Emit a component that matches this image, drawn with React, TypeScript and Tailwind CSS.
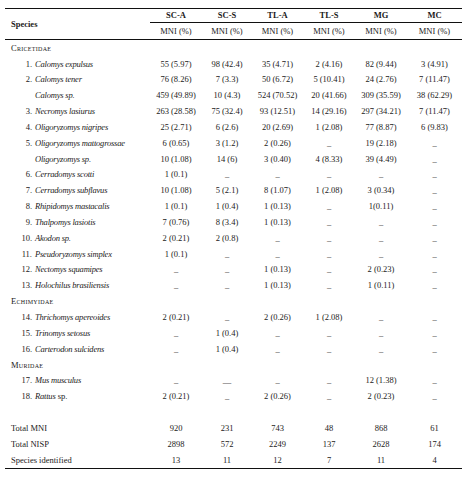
import React from 'react';

type Row =
  | { kind: 'family'; name: string }
  | { kind: 'blank' }
  | { kind: 'total'; name: string; values: string[] }
  | { kind: 'species'; n?: string; name: string; roman?: string; values: string[] };

const sites = ['SC-A', 'SC-S', 'TL-A', 'TL-S', 'MG', 'MC'];

const rows: Row[] = [
  { kind: 'family', name: 'Cricetidae' },
  { kind: 'species', n: '1.', name: 'Calomys expulsus', values: ['55 (5.97)', '98 (42.4)', '35 (4.71)', '2 (4.16)', '82 (9.44)', '3 (4.91)'] },
  { kind: 'species', n: '2.', name: 'Calomys tener', values: ['76 (8.26)', '7 (3.3)', '50 (6.72)', '5 (10.41)', '24 (2.76)', '7 (11.47)'] },
  { kind: 'species', name: 'Calomys sp.', values: ['459 (49.89)', '10 (4.3)', '524 (70.52)', '20 (41.66)', '309 (35.59)', '38 (62.29)'] },
  { kind: 'species', n: '3.', name: 'Necromys lasiurus', values: ['263 (28.58)', '75 (32.4)', '93 (12.51)', '14 (29.16)', '297 (34.21)', '7 (11.47)'] },
  { kind: 'species', n: '4.', name: 'Oligoryzomys nigripes', values: ['25 (2.71)', '6 (2.6)', '20 (2.69)', '1 (2.08)', '77 (8.87)', '6 (9.83)'] },
  { kind: 'species', n: '5.', name: 'Oligoryzomys mattogrossae', values: ['6 (0.65)', '3 (1.2)', '2 (0.26)', '_', '19 (2.18)', '_'] },
  { kind: 'species', name: 'Oligoryzomys sp.', values: ['10 (1.08)', '14 (6)', '3 (0.40)', '4 (8.33)', '39 (4.49)', '_'] },
  { kind: 'species', n: '6.', name: 'Cerradomys scotti', values: ['1 (0.1)', '_', '_', '_', '_', '_'] },
  { kind: 'species', n: '7.', name: 'Cerradomys subflavus', values: ['10 (1.08)', '5 (2.1)', '8 (1.07)', '1 (2.08)', '3 (0.34)', '_'] },
  { kind: 'species', n: '8.', name: 'Rhipidomys mastacalis', values: ['1 (0.1)', '1 (0.4)', '1 (0.13)', '_', '1(0.11)', '_'] },
  { kind: 'species', n: '9.', name: 'Thalpomys lasiotis', values: ['7 (0.76)', '8 (3.4)', '1 (0.13)', '_', '_', '_'] },
  { kind: 'species', n: '10.', name: 'Akodon sp.', values: ['2 (0.21)', '2 (0.8)', '_', '_', '_', '_'] },
  { kind: 'species', n: '11.', name: 'Pseudoryzomys simplex', values: ['1 (0.1)', '_', '_', '_', '_', '_'] },
  { kind: 'species', n: '12.', name: 'Nectomys squamipes', values: ['_', '_', '1 (0.13)', '_', '2 (0.23)', '_'] },
  { kind: 'species', n: '13.', name: 'Holochilus brasiliensis', values: ['_', '_', '1 (0.13)', '_', '1 (0.11)', '_'] },
  { kind: 'family', name: 'Echimyidae' },
  { kind: 'species', n: '14.', name: 'Thrichomys apereoides', values: ['2 (0.21)', '_', '2 (0.26)', '1 (2.08)', '_', '_'] },
  { kind: 'species', n: '15.', name: 'Trinomys setosus', values: ['_', '1 (0.4)', '_', '_', '_', '_'] },
  { kind: 'species', n: '16.', name: 'Carterodon sulcidens', values: ['_', '1 (0.4)', '_', '_', '_', '_'] },
  { kind: 'family', name: 'Muridae' },
  { kind: 'species', n: '17.', name: 'Mus musculus', values: ['_', '__', '_', '_', '12 (1.38)', '_'] },
  { kind: 'species', n: '18.', name: 'Rattus', roman: ' sp.', values: ['2 (0.21)', '_', '2 (0.26)', '_', '2 (0.23)', '_'] },
  { kind: 'blank' },
  { kind: 'total', name: 'Total MNI', values: ['920', '231', '743', '48', '868', '61'] },
  { kind: 'total', name: 'Total NISP', values: ['2898', '572', '2249', '137', '2628', '174'] },
  { kind: 'total', name: 'Species identified', values: ['13', '11', '12', '7', '11', '4'] },
];

// species column + six site columns (slightly uneven, like the typeset original)
const grid = 'grid grid-cols-[145px_52px_50px_51px_52px_52px_55px]';

function Values({ values }: { values: string[] }) {
  return (
    <>
      {values.map((v, i) => (
        <div key={i} className="flex items-center justify-center whitespace-nowrap">
          {v}
        </div>
      ))}
    </>
  );
}

export default function App() {
  return (
    <div
      className="w-[470px] h-[480px] bg-white text-[#1c1a1a] text-[8.5px] leading-none px-[5px] pt-[8px]"
      style={{ fontFamily: '"Liberation Serif", "Times New Roman", serif' }}
    >
      <div className="w-[457px] border-t border-[#111]">
        {/* header */}
        <div className={`${grid} grid-rows-[14px_16px] border-b border-[#111]`}>
          <div className="row-span-2 flex items-center pl-[6px] font-bold">Species</div>
          {sites.map((s) => (
            <div key={s} className="flex items-center justify-center font-bold border-b border-[#111]">
              {s}
            </div>
          ))}
          {sites.map((s) => (
            <div key={s + '-mni'} className="flex items-center justify-center">
              MNI (%)
            </div>
          ))}
        </div>

        {/* body */}
        {rows.map((row, i) => {
          if (row.kind === 'blank') return <div key={i} className="h-[15.85px]" />;
          if (row.kind === 'family')
            return (
              <div key={i} className="h-[15.85px] flex items-center pl-[6px] [font-variant:small-caps] tracking-[0.3px]">
                {row.name}
              </div>
            );
          if (row.kind === 'total')
            return (
              <div key={i} className={`${grid} h-[15.85px]`}>
                <div className="flex items-center pl-[6px]">{row.name}</div>
                <Values values={row.values} />
              </div>
            );
          return (
            <div key={i} className={`${grid} h-[15.85px]`}>
              <div className="flex items-center pl-[6px] whitespace-nowrap">
                <span className="w-[21px] text-right">{row.n ?? ''}</span>
                <span className="ml-[3px]">
                  <i className="tracking-[-0.2px]">{row.name}</i>
                  {row.roman}
                </span>
              </div>
              <Values values={row.values} />
            </div>
          );
        })}
        <div className="border-t-[1.5px] border-[#111]" />
      </div>
    </div>
  );
}
